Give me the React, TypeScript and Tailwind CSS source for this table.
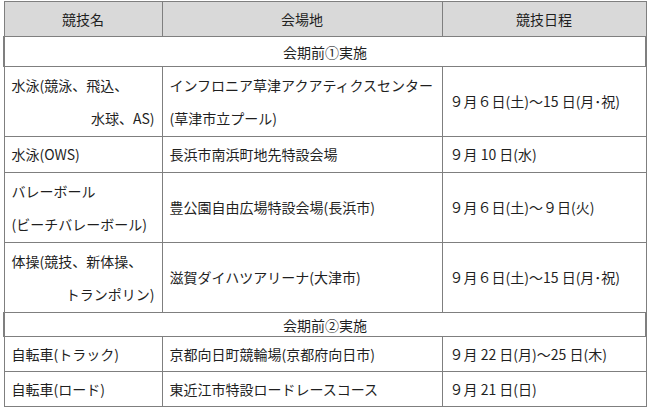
import React from 'react';

const font = { fontFamily: '"Noto Sans CJK JP", "Noto Sans", sans-serif' };

type Row = {
  name: React.ReactNode;
  venue: React.ReactNode;
  date: string;
  h: string;
  dashed?: boolean;
  dashedVenue?: boolean;
};

const cell =
  'border border-[#7f7f7f] align-middle whitespace-nowrap text-[14px] leading-[33px] text-[#1f1f1f]';
const dashedBottom = { borderBottomStyle: 'dashed', borderBottomColor: '#9a9a9a' } as const;

function SectionRow({ label, h }: { label: string; h: string }) {
  return (
    <tr className={h}>
      <td
        colSpan={3}
        className="border-y border-x-2 border-[#7f7f7f] p-0 text-center align-middle text-[14px] leading-none text-[#1f1f1f]"
      >
        {label}
      </td>
    </tr>
  );
}

function EventRow({ row }: { row: Row }) {
  return (
    <tr className={row.h}>
      <td className={`${cell} px-[7px] py-0`} style={row.dashed ? dashedBottom : undefined}>
        {row.name}
      </td>
      <td className={`${cell} px-[7px] py-0`} style={row.dashedVenue ? dashedBottom : undefined}>
        {row.venue}
      </td>
      <td className={`${cell} px-[7px] py-0`}>{row.date}</td>
    </tr>
  );
}

const before1: Row[] = [
  {
    name: (
      <>
        <div className="text-left">水泳(競泳、飛込、</div>
        <div className="text-right">水球、AS)</div>
      </>
    ),
    venue: (
      <>
        <div>インフロニア草津アクアティクスセンター</div>
        <div>(草津市立プール)</div>
      </>
    ),
    date: '９月６日(土)～15 日(月･祝)',
    h: 'h-[70px]',
    dashed: true,
  },
  { name: '水泳(OWS)', venue: '長浜市南浜町地先特設会場', date: '９月 10 日(水)', h: 'h-[36px]' },
  {
    name: (
      <>
        <div>バレーボール</div>
        <div>(ビーチバレーボール)</div>
      </>
    ),
    venue: '豊公園自由広場特設会場(長浜市)',
    date: '９月６日(土)～９日(火)',
    h: 'h-[70px]',
  },
  {
    name: (
      <>
        <div className="text-left">体操(競技、新体操、</div>
        <div className="text-right">トランポリン)</div>
      </>
    ),
    venue: '滋賀ダイハツアリーナ(大津市)',
    date: '９月６日(土)～15 日(月･祝)',
    h: 'h-[70px]',
  },
];

const before2: Row[] = [
  {
    name: '自転車(トラック)',
    venue: '京都向日町競輪場(京都府向日市)',
    date: '９月 22 日(月)～25 日(木)',
    h: 'h-[35px]',
    dashed: true,
    dashedVenue: true,
  },
  { name: '自転車(ロード)', venue: '東近江市特設ロードレースコース', date: '９月 21 日(日)', h: 'h-[35px]' },
];

export default function App() {
  return (
    <div className="h-[412px] w-[650px] bg-white pl-[3px] pt-[1px]" style={font}>
      <table className="w-[642px] table-fixed border-collapse">
        <colgroup>
          <col className="w-[158px]" />
          <col className="w-[280px]" />
          <col className="w-[204px]" />
        </colgroup>
        <thead>
          <tr className="h-[35px] bg-[#d9d9d9]">
            <th className={`${cell} p-0 font-normal`}>競技名</th>
            <th className={`${cell} p-0 font-normal`}>会場地</th>
            <th className={`${cell} p-0 font-normal`}>競技日程</th>
          </tr>
        </thead>
        <tbody>
          <SectionRow label="会期前①実施" h="h-[30px]" />
          {before1.map((r, i) => (
            <EventRow key={i} row={r} />
          ))}
          <SectionRow label="会期前②実施" h="h-[24px]" />
          {before2.map((r, i) => (
            <EventRow key={i} row={r} />
          ))}
        </tbody>
      </table>
    </div>
  );
}
